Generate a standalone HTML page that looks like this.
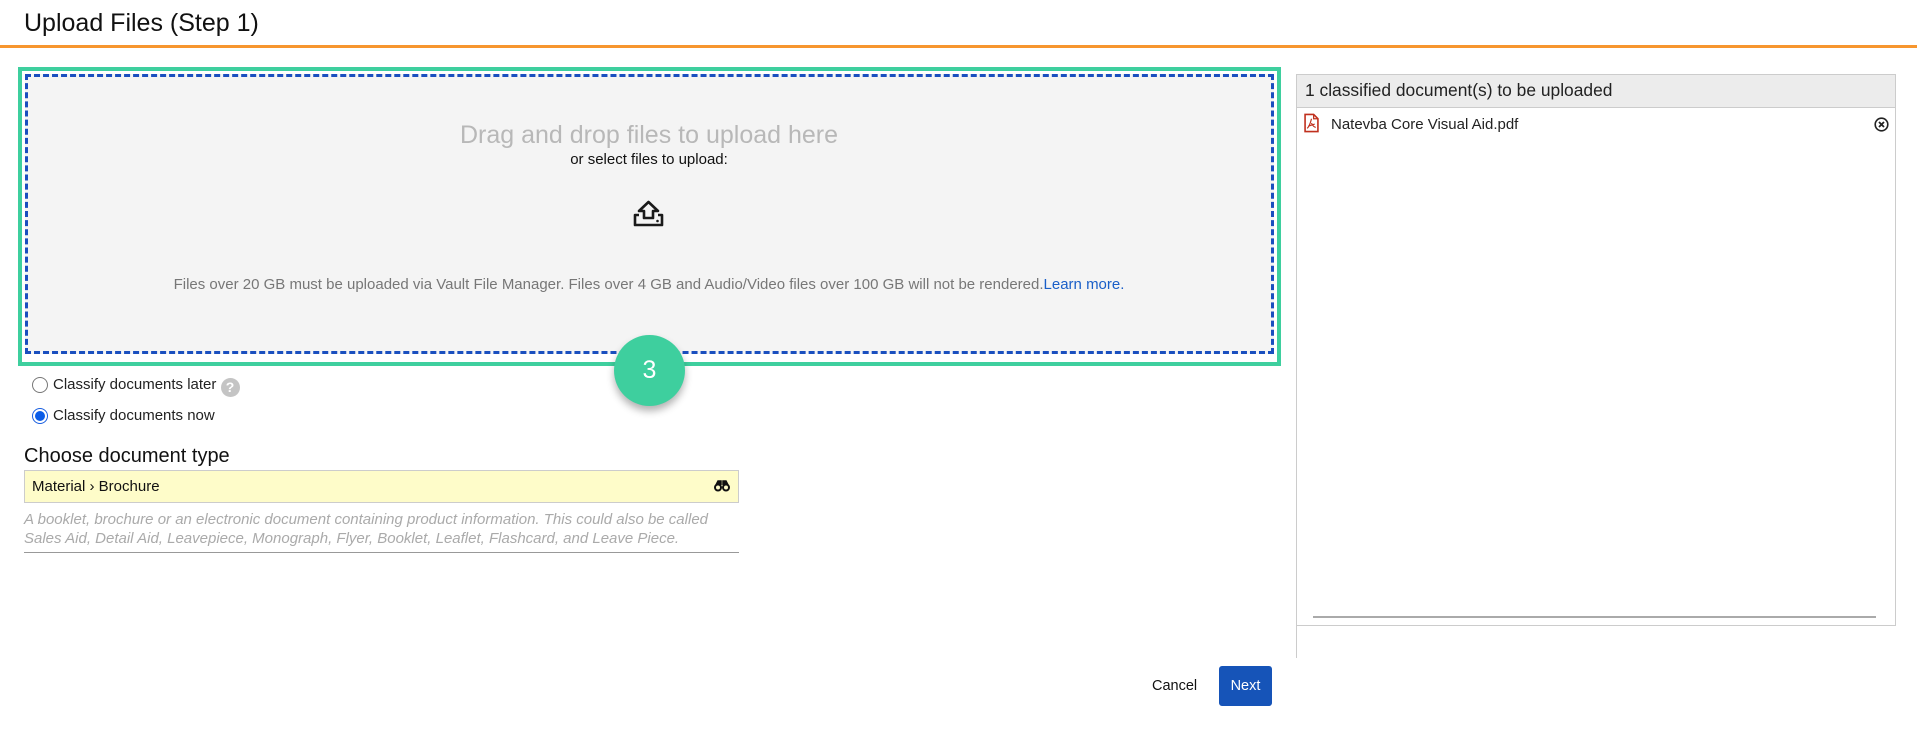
<!DOCTYPE html>
<html><head><meta charset="utf-8"><style>
*{box-sizing:border-box;margin:0;padding:0}
body{width:1917px;height:736px;background:#fff;font-family:"Liberation Sans",Arial,sans-serif;position:relative;overflow:hidden;color:#222}
.a{position:absolute;white-space:nowrap}
</style></head><body>
<div class="a" style="left:24px;top:9px;font-size:25px;color:#111">Upload Files (Step 1)</div>
<div class="a" style="left:0;top:45px;width:1917px;height:3px;background:#f7962e"></div>

<div class="a" style="left:18px;top:67px;width:1263px;height:299px;border:4px solid #3ecf9e"></div>
<div class="a" style="left:25px;top:74px;width:1249px;height:280px;background:#f4f4f4;border:3.5px dashed #1a4fbf"></div>
<div class="a" style="left:0;width:1298px;top:121px;text-align:center;font-size:25px;color:#b8b8b8">Drag and drop files to upload here</div>
<div class="a" style="left:0;width:1298px;top:151px;text-align:center;font-size:15px;color:#111">or select files to upload:</div>
<svg class="a" style="left:633px;top:200px" width="31" height="27" viewBox="0 0 31 27"><path d="M15.5 2 L25 11 L20 11 L20 18 L11 18 L11 11 L6 11 Z" fill="none" stroke="#1a1a1a" stroke-width="2.6" stroke-linejoin="round"/><path d="M6 15 L2 15 L2 25 L29 25 L29 15 L25 15" fill="none" stroke="#1a1a1a" stroke-width="2.6" stroke-linejoin="round"/><circle cx="24.5" cy="21" r="1.3" fill="#1a1a1a"/></svg>
<div class="a" style="left:0;width:1298px;top:276px;text-align:center;font-size:15px;color:#777">Files over 20 GB must be uploaded via Vault File Manager. Files over 4 GB and Audio/Video files over 100 GB will not be rendered.<span style="color:#1a5fc8">Learn more.</span></div>

<div class="a" style="left:614px;top:335px;width:71px;height:71px;border-radius:50%;background:#3ecf9e;box-shadow:0 5px 8px rgba(0,0,0,.3);color:#fff;font-size:25px;text-align:center;line-height:71px">3</div>

<div class="a" style="left:32px;top:377px;width:16px;height:16px;border-radius:50%;border:1px solid #777;background:#fff"></div>
<div class="a" style="left:53px;top:376px;font-size:15px">Classify documents later <span style="display:inline-block;vertical-align:-3px;width:19px;height:19px;border-radius:50%;background:#c4c4c4;color:#fff;font-size:14px;font-weight:bold;text-align:center;line-height:19px">?</span></div>
<div class="a" style="left:32px;top:408px;width:16px;height:16px;border-radius:50%;border:1px solid #1a5fe0;background:#fff"><div style="margin:2px;width:10px;height:10px;border-radius:50%;background:#0a5ce8"></div></div>
<div class="a" style="left:53px;top:407px;font-size:15px">Classify documents now</div>

<div class="a" style="left:24px;top:445px;font-size:20px;color:#111">Choose document type</div>
<div class="a" style="left:24px;top:470px;width:715px;height:33px;background:#fefcc9;border:1px solid #ccc"></div>
<div class="a" style="left:32px;top:478px;font-size:15px;color:#111">Material › Brochure</div>
<svg class="a" style="left:714px;top:479px" width="16" height="13" viewBox="0 0 16 13"><circle cx="4" cy="8.5" r="3" fill="none" stroke="#111" stroke-width="2"/><circle cx="12" cy="8.5" r="3" fill="none" stroke="#111" stroke-width="2"/><path d="M2 6 L4 2 L7 2 L7 6 M14 6 L12 2 L9 2 L9 6" fill="#111" stroke="#111" stroke-width="1.5"/></svg>
<div class="a" style="left:24px;top:510px;font-size:15px;font-style:italic;color:#aaa;line-height:19px">A booklet, brochure or an electronic document containing product information. This could also be called<br>Sales Aid, Detail Aid, Leavepiece, Monograph, Flyer, Booklet, Leaflet, Flashcard, and Leave Piece.</div>
<div class="a" style="left:24px;top:552px;width:715px;height:1px;background:#999"></div>

<div class="a" style="left:1296px;top:74px;width:600px;height:552px;border:1px solid #ccc"></div>
<div class="a" style="left:1296px;top:625px;width:1px;height:33px;background:#ccc"></div>
<div class="a" style="left:1297px;top:75px;width:598px;height:33px;background:#ececec;border-bottom:1px solid #ccc"></div>
<div class="a" style="left:1305px;top:80px;font-size:17.4px;color:#222">1 classified document(s) to be uploaded</div>
<svg class="a" style="left:1304px;top:113px" width="15" height="20" viewBox="0 0 14 18"><path d="M1 1 L9 1 L13 5 L13 17 L1 17 Z" fill="#fff" stroke="#c0301e" stroke-width="1.5"/><path d="M9 1 L9 5 L13 5" fill="none" stroke="#c0301e" stroke-width="1.2"/><path d="M7 5 C6 9 5 12 3 14 M7 9 C8 12 10 13 11 13 M4 12 L10 10" fill="none" stroke="#c0301e" stroke-width="1.1"/></svg>
<div class="a" style="left:1331px;top:116px;font-size:15px;color:#222">Natevba Core Visual Aid.pdf</div>
<svg class="a" style="left:1874px;top:117px" width="15" height="15" viewBox="0 0 15 15"><circle cx="7.5" cy="7.5" r="6.3" fill="none" stroke="#222" stroke-width="1.6"/><path d="M5 5 L10 10 M10 5 L5 10" stroke="#222" stroke-width="1.8"/></svg>
<div class="a" style="left:1313px;top:616px;width:563px;height:2px;background:#aaa"></div>

<div class="a" style="left:1152px;top:678px;font-size:14.5px;color:#111">Cancel</div>
<div class="a" style="left:1219px;top:666px;width:53px;height:40px;background:#1654b8;border-radius:3px;color:#fff;font-size:14.5px;text-align:center;line-height:40px">Next</div>
</body></html>
